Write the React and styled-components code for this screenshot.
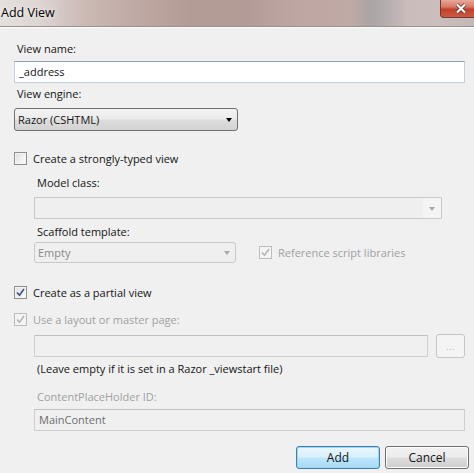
import React from "react";
import styled, { createGlobalStyle } from "styled-components";

const Global = createGlobalStyle`
  html, body { margin: 0; padding: 0; background: #f0f0f0; }
  body { font-family: "Open Sans", "Noto Sans", sans-serif; }
  * { box-sizing: border-box; }
`;

const Window = styled.div`
  width: 474px;
  height: 473px;
  overflow: hidden;
  background: #f0f0f0;
  display: flex;
  flex-direction: column;
  font-family: "Open Sans", "Noto Sans", sans-serif;
  font-size: 11px;
  color: #141414;
`;

const TitleBar = styled.header`
  height: 27px;
  flex: none;
  display: flex;
  align-items: flex-start;
  justify-content: space-between;
  background-color: #b9a29d;
  background-image: linear-gradient(to right, #e4e0de 0%, #ddd6d3 8%, #cbb9b4 18%, #bea7a2 30%, #b49b96 40%, #b39c97 52%, #bea6a2 62%, #c0aaa6 74%, #aba3a5 78%, #b3acad 81%, #c9bcba 86%, #cbbebc 92%, #c4b8b6 100%);
  border-bottom: 1px solid #9b908e;
`;

const Title = styled.span`
  font-size: 12.5px;
  padding: 4px 0 0 1px;
  color: #000;
  text-shadow: 0 0 5px #ffffff;
`;

const CloseBtn = styled.span`
  flex: none;
  width: 36px;
  height: 18px;
  margin-right: -2px;
  border: 1px solid #6e3a33;
  border-top-width: 0;
  border-radius: 0 0 0 4px;
  background-color: #c94f3c;
  background-image: linear-gradient(to bottom, #e7a898 0%, #d87a66 40%, #c2402b 55%, #cc5a44 100%);
  display: flex;
  align-items: center;
  justify-content: center;
  padding-left: 6px;
`;

const Body = styled.main`
  display: flex;
  flex-direction: column;
  align-items: flex-start;
  padding: 13px 9px 0 14px;
  border-top: 1px solid #fbfbfb;
`;

const Label = styled.div`
  height: 16px;
  line-height: 16px;
  margin-top: ${p => p.$mt || 0}px;
  margin-left: ${p => (p.$indent ? 23 : 3)}px;
  color: ${p => (p.$disabled ? "#a0a0a0" : "#141414")};
  white-space: nowrap;
`;

const TextBox = styled.div`
  height: 22px;
  width: ${p => p.$w}px;
  margin-top: ${p => p.$mt || 0}px;
  margin-left: ${p => (p.$indent ? 20 : 0)}px;
  border: 1px solid ${p => (p.$disabled ? "#cfcfcf" : "#c2cfdd")};
  border-top-color: ${p => (p.$disabled ? "#c2c2c2" : "#8ea0b6")};
  background: ${p => (p.$disabled ? "#f0f0f0" : "#fff")};
  padding: 0 4px;
  line-height: 20px;
  color: ${p => (p.$disabled ? "#6d6d6d" : "#141414")};
  border-radius: 1px;
  flex: none;
`;

const Combo = styled.div`
  height: ${p => p.$h || 22}px;
  width: ${p => p.$w}px;
  margin-top: ${p => p.$mt || 0}px;
  margin-left: ${p => (p.$indent ? 20 : 0)}px;
  border: 1px solid ${p => (p.$disabled ? "#c9c9c9" : "#707070")};
  border-radius: ${p => (p.$editable ? 1 : 3)}px;
  background: ${p =>
    p.$disabled
      ? "#efefef"
      : "linear-gradient(180deg, #f3f3f3 0%, #ebebeb 48%, #dddddd 52%, #d3d3d3 100%)"};
  display: flex;
  align-items: center;
  justify-content: space-between;
  padding: 0 0 0 3px;
  color: ${p => (p.$disabled ? "#8a8a8a" : "#141414")};
  flex: none;
`;

const ArrowZone = styled.div`
  width: ${p => (p.$boxed ? 18 : 17)}px;
  align-self: stretch;
  display: flex;
  align-items: center;
  justify-content: center;
  background: ${p => (p.$boxed ? "#f4f4f4" : "transparent")};
`;

const Arrow = styled.div`
  width: 0;
  height: 0;
  border-left: 3.5px solid transparent;
  border-right: 3.5px solid transparent;
  border-top: 4px solid ${p => (p.$disabled ? "#a8a8a8" : "#000")};
  margin-top: 1px;
`;

const CheckRow = styled.div`
  display: flex;
  align-items: center;
  height: 16px;
  margin-top: ${p => p.$mt || 0}px;
  gap: 6px;
  color: ${p => (p.$disabled ? "#a0a0a0" : "#141414")};
  white-space: nowrap;
`;

const Box = styled.div`
  width: 13px;
  height: 13px;
  flex: none;
  border: 1px solid ${p => (p.$disabled ? "#bcbcbc" : "#8e8f8f")};
  background: ${p =>
    p.$disabled
      ? "#f4f4f4"
      : "linear-gradient(135deg, #dcdcdc 0%, #f2f2f2 60%, #fbfbfb 100%)"};
  box-shadow: inset 0 0 0 1px #f4f4f4;
  display: flex;
  align-items: center;
  justify-content: center;
`;

const Row = styled.div`
  display: flex;
  align-items: ${p => p.$align || "center"};
  margin-top: ${p => p.$mt || 0}px;
  gap: ${p => p.$gap || 0}px;
`;

const BrowseBtn = styled.div`
  flex: none;
  width: 29px;
  height: 24px;
  margin-top: -1px;
  border: 1px solid #c5c5c5;
  border-radius: 3px;
  background: #f4f4f4;
  color: #b0b0b0;
  font-size: 9px;
  display: flex;
  align-items: center;
  justify-content: center;
  letter-spacing: 0.5px;
`;

const Buttons = styled.div`
  align-self: stretch;
  display: flex;
  justify-content: flex-end;
  gap: 5px;
  margin-top: 15px;
  margin-right: -4px;
`;

const Button = styled.div`
  width: 84px;
  height: 23px;
  border: 1px solid ${p => (p.$default ? "#3c7fb1" : "#707070")};
  border-radius: 3px;
  background: ${p =>
    p.$default
      ? "linear-gradient(180deg, #eaf6fd 0%, #d9f0fc 48%, #bee6fd 52%, #a7d9f5 100%)"
      : "linear-gradient(180deg, #f2f2f2 0%, #ebebeb 48%, #dddddd 52%, #cfcfcf 100%)"};
  box-shadow: inset 0 0 0 1px ${p => (p.$default ? "#9fd6f3" : "#fcfcfc")};
  display: flex;
  align-items: center;
  justify-content: center;
  color: #141414;
  font-size: 12px;
`;

const Check = ({ color }) => (
  <svg width="9" height="9" viewBox="0 0 9 9">
    <path d="M1 4.5 L3.5 7.2 L8 1" fill="none" stroke={color} strokeWidth="1.6" />
  </svg>
);

export default function App() {
  return (
    <>
      <Global />
      <Window>
        <TitleBar>
          <Title>Add View</Title>
          <CloseBtn>
            <svg width="12" height="11" viewBox="0 0 12 11">
              <path d="M2 1.5 L10 9.5 M10 1.5 L2 9.5" stroke="#5a2a24" strokeWidth="3.6" />
              <path d="M2 1.5 L10 9.5 M10 1.5 L2 9.5" stroke="#fff" strokeWidth="2.2" />
            </svg>
          </CloseBtn>
        </TitleBar>
        <Body>
          <Label>View name:</Label>
          <TextBox $w={451} $mt={4}>_address</TextBox>
          <Label $mt={3}>View engine:</Label>
          <Combo $w={224} $h={23} $mt={6}>
            <span>Razor (CSHTML)</span>
            <ArrowZone><Arrow /></ArrowZone>
          </Combo>

          <CheckRow $mt={19}>
            <Box />
            <span>Create a strongly-typed view</span>
          </CheckRow>
          <Label $indent $mt={9}>Model class:</Label>
          <Combo $indent $editable $disabled $w={408} $mt={6}>
            <span />
            <ArrowZone $boxed><Arrow $disabled /></ArrowZone>
          </Combo>
          <Label $indent $mt={5}>Scaffold template:</Label>
          <Row $mt={2} $gap={23}>
            <Combo $indent $disabled $w={202} $h={21}>
              <span>Empty</span>
              <ArrowZone><Arrow $disabled /></ArrowZone>
            </Combo>
            <CheckRow $disabled>
              <Box $disabled><Check color="#b4b4b4" /></Box>
              <span>Reference script libraries</span>
            </CheckRow>
          </Row>

          <CheckRow $mt={21}>
            <Box><Check color="#3b4f8a" /></Box>
            <span>Create as a partial view</span>
          </CheckRow>
          <CheckRow $mt={11} $disabled>
            <Box $disabled><Check color="#b4b4b4" /></Box>
            <span>Use a layout or master page:</span>
          </CheckRow>
          <Row $mt={8} $gap={8} $align="flex-start">
            <TextBox $indent $disabled $w={394} />
            <BrowseBtn>...</BrowseBtn>
          </Row>
          <Label $indent $mt={3}>(Leave empty if it is set in a Razor _viewstart file)</Label>
          <Label $indent $disabled $mt={12}>ContentPlaceHolder ID:</Label>
          <TextBox $indent $disabled $w={431} $mt={4}>MainContent</TextBox>

          <Buttons>
            <Button $default>Add</Button>
            <Button>Cancel</Button>
          </Buttons>
        </Body>
      </Window>
    </>
  );
}
